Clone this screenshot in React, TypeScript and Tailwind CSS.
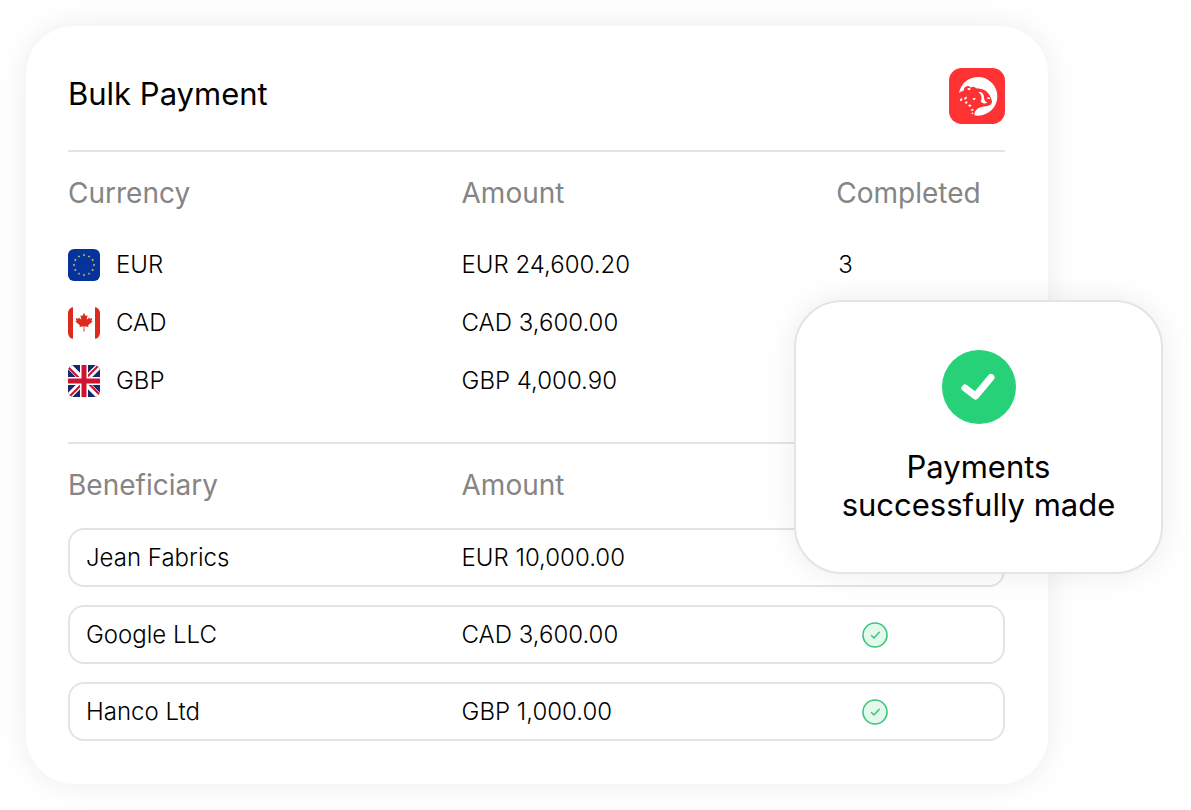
import React from "react";

type Payment = {
  currency: string;
  amount: string;
  completed: string;
  flag: React.ReactNode;
};

type Beneficiary = {
  name: string;
  amount: string;
};

const EU_STARS = Array.from({ length: 12 }, (_, i) => {
  const angle = (i * Math.PI) / 6;
  return { x: 16 + 10 * Math.sin(angle), y: 16 - 10 * Math.cos(angle) };
});

function EuFlag() {
  return (
    <svg viewBox="0 0 32 32" className="size-8 shrink-0 rounded-md" aria-hidden="true">
      <rect width="32" height="32" fill="#053399" />
      {EU_STARS.map((star, i) => (
        <path
          key={i}
          transform={`translate(${star.x} ${star.y})`}
          d="M0-1.4.4-.45 1.4-.4.6.2.85 1.2 0 .65-.85 1.2-.6.2-1.4-.4-.4-.45Z"
          fill="#d9cb5a"
        />
      ))}
    </svg>
  );
}

function CanadaFlag() {
  return (
    <svg viewBox="0 0 32 32" className="size-8 shrink-0 rounded-md" aria-hidden="true">
      <rect width="32" height="32" fill="#fff" />
      <path d="M0 0h5v32H0zM27 0h5v32h-5z" fill="#dc2a20" />
      <path
        d="m16 6-1.7 3-1.9-.8.9 4.6-2.4-2.3-.5 1.2-2.7-.5.8 2.7-1.2.6 4.6 3.700-.5 1.8 4.2-.7-.1 5.200h1l-.1-5.200 4.200.7-.5-1.800 4.600-3.700-1.200-.6.8-2.700-2.700.5-.5-1.200-2.400 2.300.9-4.600-1.900.8Z"
        fill="#dc2a20"
      />
    </svg>
  );
}

function UkFlag() {
  return (
    <svg viewBox="0 0 32 32" className="size-8 shrink-0 rounded-md" aria-hidden="true">
      <rect width="32" height="32" fill="#16296f" />
      <path d="m0 0 32 32M32 0 0 32" stroke="#fff" strokeWidth="6" />
      <path d="M-1 1 13 15M32-1 18 13M33 31 19 17M0 33l14-14" stroke="#c8102e" strokeWidth="2" />
      <path d="M16 0v32M0 16h32" stroke="#fff" strokeWidth="8" />
      <path d="M16 0v32M0 16h32" stroke="#d0112f" strokeWidth="5" />
    </svg>
  );
}

function Logo() {
  return (
    <svg viewBox="36 33 168 168" className="size-14 shrink-0" role="img" aria-label="Logo">
      <rect x="36" y="33" width="168" height="168" rx="38" fill="#fe3232" />
      <path
        d="M66 107A58 58 0 1 1 112 175C112 160 122 151 138 149L152 147C160 145 166 140 165 133L162 123C158 115 154 107 147 102C138 96 128 95 117 94C113 89 106 88 102 92C98 87 90 86 86 89C81 92 80 97 80 101C75 102 70 104 66 107Z"
        fill="#fff"
      />
      <path
        d="M124 105C136 103 141 112 141 121C141 129 144 134 151 137C142 142 134 138 131 133C136 125 134 112 124 105Z"
        fill="#fff"
      />
      <path d="M149 123C153 119 159 121 160 125C156 127 152 127 149 123Z" fill="#fff" />
      <g fill="#fff">
        <path d="m90 95 7-3 5 5-7 3ZM68 128l7-6 1 7-5 4ZM81 123l8-5v7l-6 3Z" />
        <path d="m107 124 9-1-2 5-6 1ZM84 135l7-2v6l-6 1ZM93 145l6-3 5 4-6 4Z" />
        <path d="m101 158 7-3 2 5-6 2ZM103 169l4-3 2 4-4 2Z" />
      </g>
    </svg>
  );
}

function PaidIcon() {
  return (
    <svg viewBox="0 0 26 26" className="size-[26px]" fill="none" role="img" aria-label="Paid">
      <circle cx="13" cy="13" r="12" fill="#e2f9eb" stroke="#3cc47c" strokeWidth="1.6" />
      <path
        d="m9.5 13.5 2.500 2.500 5.200-5.700"
        stroke="#3cc47c"
        strokeWidth="1.5"
        strokeLinecap="round"
        strokeLinejoin="round"
      />
    </svg>
  );
}

const payments: Payment[] = [
  { currency: "EUR", amount: "EUR 24,600.20", completed: "3", flag: <EuFlag /> },
  { currency: "CAD", amount: "CAD 3,600.00", completed: "1", flag: <CanadaFlag /> },
  { currency: "GBP", amount: "GBP 4,000.90", completed: "2", flag: <UkFlag /> },
];

const beneficiaries: Beneficiary[] = [
  { name: "Jean Fabrics", amount: "EUR 10,000.00" },
  { name: "Google LLC", amount: "CAD 3,600.00" },
  { name: "Hanco Ltd", amount: "GBP 1,000.00" },
];

export default function App() {
  return (
    <main className="min-h-screen bg-white p-[26px] font-['Inter',sans-serif] text-2xl text-black">
      <div className="relative">
        <section className="mr-[117px] rounded-[48px] bg-white pt-[42px] pr-[43px] pb-[25px] pl-[42px] shadow-[0_0_32px_rgba(0,0,0,0.08)]">
          <header className="flex items-start justify-between border-b-2 border-[#e4e4e4] pb-[26px]">
            <h1 className="pt-1 text-[31px] leading-[44px]">Bulk Payment</h1>
            <Logo />
          </header>

          <table className="w-full table-fixed border-b-2 border-[#e4e4e4] text-left">
            <thead className="text-[28px] text-[#858585]">
              <tr className="h-[84px]">
                <th className="w-[42%] font-normal">Currency</th>
                <th className="w-[40%] font-normal">Amount</th>
                <th className="font-normal">Completed</th>
              </tr>
            </thead>
            <tbody className="font-[350]">
              {payments.map((payment) => (
                <tr key={payment.currency} className="h-[58px] last:h-[91px] last:align-top">
                  <td>
                    <div className="flex h-[58px] items-center gap-4">
                      {payment.flag}
                      {payment.currency}
                    </div>
                  </td>
                  <td className="leading-[58px]">{payment.amount}</td>
                  <td className="pl-0.5 leading-[58px]">{payment.completed}</td>
                </tr>
              ))}
            </tbody>
          </table>

          <table className="w-full table-fixed border-separate border-spacing-x-0 border-spacing-y-[18px] text-left">
            <thead className="text-[28px] text-[#858585]">
              <tr className="h-12">
                <th className="w-[42%] font-normal">Beneficiary</th>
                <th className="w-[40%] font-normal">Amount</th>
                <th aria-label="Status" />
              </tr>
            </thead>
            <tbody className="font-[350]">
              {beneficiaries.map((item) => (
                <tr key={item.name} className="h-[59px]">
                  <td className="rounded-l-2xl border-2 border-r-0 border-[#e4e4e4] pl-4">{item.name}</td>
                  <td className="border-y-2 border-[#e4e4e4]">{item.amount}</td>
                  <td className="rounded-r-2xl border-2 border-l-0 border-[#e4e4e4] pl-[26px]">
                    <PaidIcon />
                  </td>
                </tr>
              ))}
            </tbody>
          </table>
        </section>

        {/* Success message on top of the card */}
        <div
          role="status"
          className="absolute top-[274px] right-0.5 flex w-[369px] flex-col items-center rounded-[48px] border-2 border-[#e4e4e4] bg-white pt-12 pb-12 shadow-[0_0_32px_rgba(0,0,0,0.08)]"
        >
          <svg viewBox="0 0 74 74" className="size-[74px]" fill="none" aria-hidden="true">
            <circle cx="37" cy="37" r="37" fill="#27d177" />
            <path
              d="m23 38 10.500 8L49 27.500"
              stroke="#fff"
              strokeWidth="7"
              strokeLinecap="round"
              strokeLinejoin="round"
            />
          </svg>
          <p className="mt-6 text-center text-[31px] leading-[38px]">
            Payments
            <br />
            successfully made
          </p>
        </div>
      </div>
    </main>
  );
}
